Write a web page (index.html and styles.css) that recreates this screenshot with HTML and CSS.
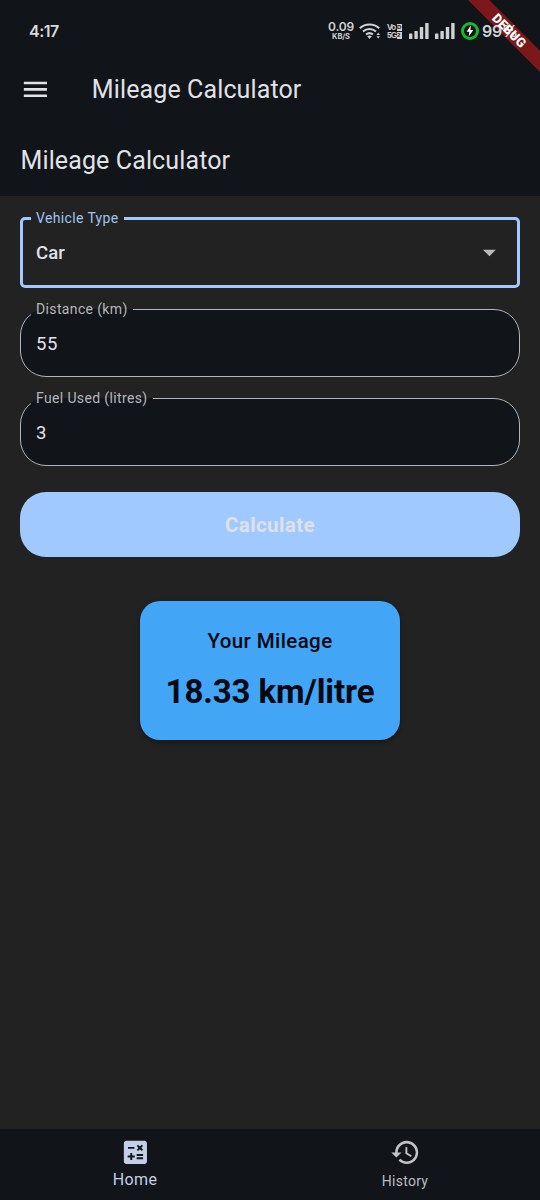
FILE: index.html
```html
<!DOCTYPE html>
<html lang="en">
<head>
<meta charset="utf-8">
<title>Mileage Calculator</title>
<link rel="stylesheet" href="styles.css">
</head>
<body>
<div class="app">
  <div class="debug-banner band"></div>
  <div class="status">
    <span class="clock">4:17</span>
    <div class="status-right">
      <div class="speed"><b>0.09</b><small>KB/S</small></div>
      <svg class="wifi" width="23" height="18" viewBox="0 0 23 18" fill="none" stroke="#d0d1d4" stroke-width="2">
        <path d="M.8 6.2a14.4 14.4 0 0 1 19.4 0M4 9.6a9.6 9.6 0 0 1 13 0M7 12.6a5.5 5.5 0 0 1 7 0"/>
        <path d="M8.2 14.3q2.3-1.7 4.6 0L10.5 17z" fill="#d0d1d4" stroke="none"/>
        <path d="M17.4 13l1.8-2.2L21 13zM17.4 14.2L19.2 16.4 21 14.2z" fill="#d0d1d4" stroke="none"/>
      </svg>
      <div class="volte"><span>Vo<i>D</i></span><span>5G<i>2</i></span></div>
      <svg class="bars" width="20" height="16" viewBox="0 0 20 16" fill="#d0d1d4"><rect y="10.5" width="3.4" height="5.5" rx=".6"/><rect x="5.4" y="8" width="3.4" height="8" rx=".6"/><rect x="10.8" y="4" width="3.4" height="12" rx=".6"/><rect x="16.2" width="3.4" height="16" rx=".6"/></svg>
      <svg class="bars" width="20" height="16" viewBox="0 0 20 16" fill="#d0d1d4"><rect y="10.5" width="3.4" height="5.5" rx=".6"/><rect x="5.4" y="8" width="3.4" height="8" rx=".6"/><rect x="10.8" y="4" width="3.4" height="12" rx=".6"/><rect x="16.2" width="3.4" height="16" rx=".6"/></svg>
      <svg class="charge" width="18" height="18" viewBox="0 0 18 18"><circle cx="9" cy="9" r="7.5" fill="#11151a" stroke="#1cb52c" stroke-width="3"/><path d="M9.8 3.6L5.6 9.8h2.7l-.6 4.8 4.6-6.6H9.4z" fill="#fff"/></svg>
      <span class="battery">99%</span>
    </div>
  </div>
  <div class="debug-banner label">DEBUG</div>
  <header class="appbar">
    <svg class="menu" viewBox="0 0 24 24" fill="#e1e2e8"><path d="M3 18h18v-2H3v2zm0-5h18v-2H3v2zm0-7v2h18V6H3z"/></svg>
    <h1>Mileage Calculator</h1>
  </header>
  <h2 class="subtitle">Mileage Calculator</h2>
  <main class="content">
    <fieldset class="field select">
      <legend>Vehicle Type</legend>
      <span class="value">Car</span>
      <svg class="arrow" viewBox="0 0 24 24" fill="#b9babc"><path d="M7 10l5 5 5-5z"/></svg>
    </fieldset>
    <fieldset class="field distance">
      <legend>Distance (km)</legend>
      <span class="value">55</span>
    </fieldset>
    <fieldset class="field fuel">
      <legend>Fuel Used (litres)</legend>
      <span class="value">3</span>
    </fieldset>
    <button class="calculate">Calculate</button>
    <section class="result">
      <div class="result-label">Your Mileage</div>
      <div class="result-value">18.33 km/litre</div>
    </section>
  </main>
  <nav class="tabs">
    <div class="tab active">
      <svg viewBox="0 0 24 24" fill="#c3cfe4"><path fill-rule="evenodd" d="M19 3H5c-1.1 0-2 .9-2 2v14c0 1.1.9 2 2 2h14c1.1 0 2-.9 2-2V5c0-1.1-.9-2-2-2zm-5.97 4.06L14.09 6l1.41 1.41L16.91 6l1.06 1.06-1.41 1.41 1.41 1.41-1.06 1.06-1.41-1.4-1.41 1.41-1.06-1.06 1.41-1.41-1.41-1.42zm-6.78.66h5v1.5h-5v-1.5zM11.5 16h-2v2H8v-2H6v-1.5h2v-2h1.5v2h2V16zm6.5 1.25h-5v-1.5h5v1.5zm0-2.5h-5v-1.5h5v1.5z"/></svg>
      <span>Home</span>
    </div>
    <div class="tab">
      <svg viewBox="0 0 24 24" fill="#c1c2c6"><path d="M13 3c-4.97 0-9 4.03-9 9H1l3.89 3.89.07.14L9 12H6c0-3.87 3.13-7 7-7s7 3.13 7 7-3.13 7-7 7c-1.93 0-3.68-.79-4.94-2.06l-1.42 1.42C8.27 19.99 10.51 21 13 21c4.97 0 9-4.03 9-9s-4.03-9-9-9zm-1 5v5l4.28 2.54.72-1.21-3.5-2.08V8H12z"/></svg>
      <span>History</span>
    </div>
  </nav>
</div>
</body>
</html>
```
FILE: styles.css
```css
* { box-sizing: border-box; }
body { margin: 0; background: #222; font-family: Roboto, sans-serif; color: #e1e2e8; }
.app { position: relative; display: flex; flex-direction: column; height: 1200px; overflow: hidden; background: linear-gradient(#111418 196px, #222 196px); }

.debug-banner { position: absolute; top: 22.8px; left: 439px; width: 140px; height: 15.4px; transform: rotate(45deg); text-align: center; font-size: 13px; line-height: 15.4px; font-weight: 900; color: #fff; }
.band { background: #7c181a; }
.label { z-index: 2; }

.status { position: relative; z-index: 1; display: flex; justify-content: space-between; align-items: center; height: 62px; padding: 0 21px 0 29px; }
.clock { font-size: 16px; font-weight: 600; font-family: Inter, sans-serif; letter-spacing: -.5px; color: #d8d9dc; }
.status-right { display: flex; align-items: center; }
.speed { display: flex; flex-direction: column; align-items: center; gap: 1px; width: 26px; padding-bottom: 1px; font-family: Inter, sans-serif; color: #d0d1d4; }
.speed b { height: 10px; font-size: 12px; line-height: 10px; font-weight: 600; letter-spacing: -.2px; }
.speed small { height: 7px; font-size: 7.5px; line-height: 7px; font-weight: 700; letter-spacing: -.1px; }
.wifi { margin-left: 5px; }
.volte { display: flex; flex-direction: column; gap: 1px; width: 15px; margin: 0 1px 0 5px; font: 700 8.5px/7px "Liberation Sans", sans-serif; color: #d0d1d4; }
.volte span { display: flex; justify-content: space-between; letter-spacing: -1.1px; }
.volte i { flex: none; width: 5px; height: 7px; font: 700 6px/7px "Liberation Sans", sans-serif; letter-spacing: 0; background: #d0d1d4; color: #111418; }
.bars { margin-left: 6px; }
.charge { margin-left: 6px; }
.battery { margin-left: 3px; width: 37px; font: 600 16px/20px Inter, sans-serif; letter-spacing: -.2px; color: #d0d1d4; }

.appbar { display: flex; align-items: center; height: 54px; padding-left: 20px; }
.menu { width: 30.8px; height: 30.8px; }
h1, h2 { margin: 0; font-size: 25px; font-weight: 400; line-height: 32px; letter-spacing: .12px; white-space: nowrap; }
h1 { margin-left: 41px; padding-top: 1px; }
.subtitle { height: 80px; padding: 29px 0 0 20.5px; }

.content { flex: 1; display: flex; flex-direction: column; padding: 0 20px; }
.field { display: flex; align-items: center; min-width: 0; margin: 0; padding: 14.5px 15px 0 10px; border: 1.3px solid #b4b5ba; border-radius: 26px; background: #111418; }
.field legend { height: 18px; padding: 0 5px; font-size: 14px; line-height: 18px; letter-spacing: .36px; color: #b5b7bc; }
.value { padding-left: 5px; font-size: 18.5px; line-height: 22px; letter-spacing: .5px; }
.select { height: 79px; margin-top: 13px; padding: 10px 15px 0 8px; border: 3px solid #a0caff; border-radius: 5px; background: none; }
.select legend { color: #a0c4ef; }
.select .value { flex: 1; padding-top: 1px; font-weight: 500; letter-spacing: .1px; }
.arrow { width: 30.8px; height: 30.8px; margin-right: -3px; }
.distance { height: 77px; margin-top: 12px; }
.fuel { height: 77px; margin-top: 12px; }
.calculate { height: 65px; margin: 26px 0 0; padding: 0; border: 0; border-radius: 26px; background: #a0caff; color: #dfe1e8; font: 700 20.5px/24px Roboto, sans-serif; letter-spacing: .4px; }
.result { align-self: center; width: 260px; height: 139px; margin-top: 43.5px; padding-top: 26.5px; border-radius: 20px; background: #42a5f5; color: #030911; text-align: center; box-shadow: 0 2px 4px rgba(0,0,0,.4); }
.result-label { font-size: 20.5px; line-height: 28px; font-weight: 500; letter-spacing: .4px; }
.result-value { margin-top: 17px; font-size: 33px; line-height: 40px; font-weight: 700; letter-spacing: -.1px; }

.tabs { display: flex; height: 71px; background: #111418; }
.tab { flex: 1; display: flex; flex-direction: column; align-items: center; padding-top: 8px; color: #b9bbc0; font-size: 14px; letter-spacing: .25px; }
.tab svg { width: 30.8px; height: 30.8px; }
.tab span { margin-top: 4.5px; line-height: 18px; }
.tab.active { color: #c3cfe4; font-size: 16px; letter-spacing: .4px; }
.tab.active span { margin-top: 3.2px; }
```
